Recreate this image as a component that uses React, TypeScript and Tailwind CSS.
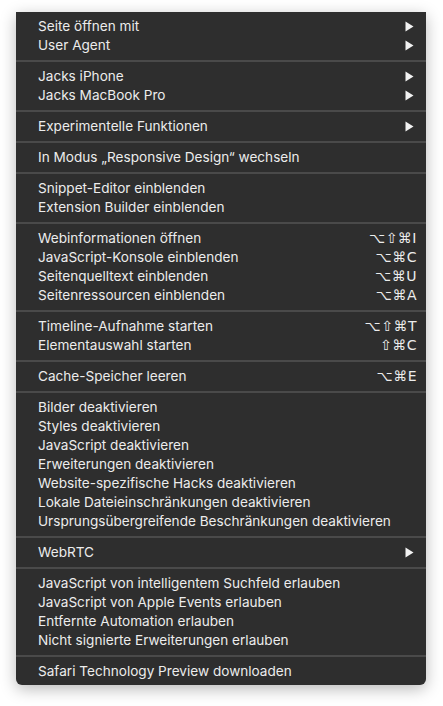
import React from "react";

type Item = { label: string; submenu?: boolean; shortcut?: string };

const groups: Item[][] = [
  [{ label: "Seite öffnen mit", submenu: true }, { label: "User Agent", submenu: true }],
  [{ label: "Jacks iPhone", submenu: true }, { label: "Jacks MacBook Pro", submenu: true }],
  [{ label: "Experimentelle Funktionen", submenu: true }],
  [{ label: "In Modus „Responsive Design“ wechseln" }],
  [{ label: "Snippet-Editor einblenden" }, { label: "Extension Builder einblenden" }],
  [
    { label: "Webinformationen öffnen", shortcut: "⌥⇧⌘I" },
    { label: "JavaScript-Konsole einblenden", shortcut: "⌥⌘C" },
    { label: "Seitenquelltext einblenden", shortcut: "⌥⌘U" },
    { label: "Seitenressourcen einblenden", shortcut: "⌥⌘A" },
  ],
  [
    { label: "Timeline-Aufnahme starten", shortcut: "⌥⇧⌘T" },
    { label: "Elementauswahl starten", shortcut: "⇧⌘C" },
  ],
  [{ label: "Cache-Speicher leeren", shortcut: "⌥⌘E" }],
  [
    { label: "Bilder deaktivieren" },
    { label: "Styles deaktivieren" },
    { label: "JavaScript deaktivieren" },
    { label: "Erweiterungen deaktivieren" },
    { label: "Website-spezifische Hacks deaktivieren" },
    { label: "Lokale Dateieinschränkungen deaktivieren" },
    { label: "Ursprungsübergreifende Beschränkungen deaktivieren" },
  ],
  [{ label: "WebRTC", submenu: true }],
  [
    { label: "JavaScript von intelligentem Suchfeld erlauben" },
    { label: "JavaScript von Apple Events erlauben" },
    { label: "Entfernte Automation erlauben" },
    { label: "Nicht signierte Erweiterungen erlauben" },
  ],
  [{ label: "Safari Technology Preview downloaden" }],
];

function Arrow() {
  return (
    <svg width="9" height="11" viewBox="0 0 9 11" className="mr-[3px]">
      <path d="M0.5 0.5 L8.5 5.5 L0.5 10.5 Z" fill="#f2f2f2" />
    </svg>
  );
}

function Row({ item }: { item: Item }) {
  return (
    <div className="flex h-[19px] items-center justify-between pl-[22px] pr-[9px]">
      <span>{item.label}</span>
      {item.submenu && <Arrow />}
      {item.shortcut && (
        <span className="font-['DejaVu_Sans',sans-serif] text-[14px] tracking-[0.5px]">{item.shortcut}</span>
      )}
    </div>
  );
}

export default function App() {
  return (
    <div className="h-[706px] w-[443px] bg-white pt-[12px] pl-[16px]">
      <div className="w-[410px] rounded-b-[6px] bg-[#2e2e2e] pt-[5px] pb-[4px] font-['Inter',sans-serif] text-[13.6px] text-[#ececec] shadow-[0_4px_16px_rgba(0,0,0,0.28)]">
        {groups.map((g, i) => (
          <div key={i}>
            {i > 0 && (
              <div className="flex h-[12px] items-center">
                <div className="h-[2px] w-full bg-[#4a4a4a]" />
              </div>
            )}
            {g.map((item) => (
              <Row key={item.label} item={item} />
            ))}
          </div>
        ))}
      </div>
    </div>
  );
}
